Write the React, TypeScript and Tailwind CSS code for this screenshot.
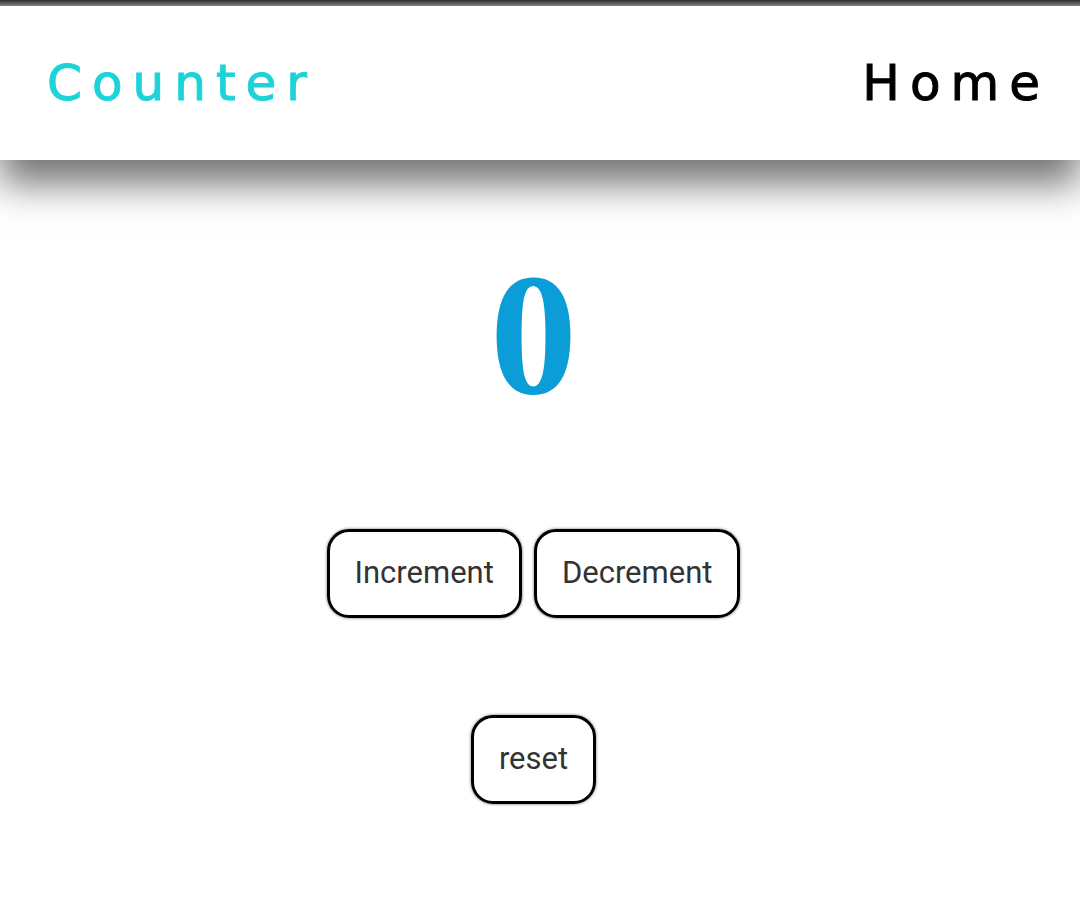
export default function App() {
  return (
    <div className="min-h-[900px] w-full bg-white">
      <div className="h-[6px] w-full bg-gradient-to-b from-[#2f3034] to-[#8a8b8f]" />
      <nav
        className="relative z-10 flex h-[154px] items-center justify-between bg-white pl-[47px] pr-[30px] shadow-[0_24px_36px_rgba(0,0,0,0.55)]"
        style={{ fontFamily: '"DejaVu Sans", "Noto Sans", sans-serif' }}
      >
        <span className="text-[50px] tracking-[0.2em] text-[#1dd3d8] [-webkit-text-stroke:1px_#1dd3d8]">Counter</span>
        <span className="text-[50px] tracking-[0.2em] text-black [-webkit-text-stroke:1px_#000]">Home</span>
      </nav>

      <main className="flex flex-col items-center pr-[13px]" style={{ fontFamily: "Roboto, sans-serif" }}>
        <div
          className="mt-[89px] text-[174px] font-bold leading-[172px] text-[#0b9dd7]"
          style={{ fontFamily: '"Liberation Serif", serif' }}
        >
          0
        </div>

        <div className="mt-[108px] flex gap-[12px]">
          <button className="h-[89px] rounded-[22px] border-[3px] border-black px-[25px] text-[31px] text-[#333] shadow-[0_0_3px_rgba(0,0,0,0.6)]">
            Increment
          </button>
          <button className="h-[89px] rounded-[22px] border-[3px] border-black px-[25px] text-[31px] text-[#333] shadow-[0_0_3px_rgba(0,0,0,0.6)]">
            Decrement
          </button>
        </div>

        <button className="mt-[97px] h-[89px] rounded-[22px] border-[3px] border-black px-[25px] text-[31px] text-[#333] shadow-[0_0_3px_rgba(0,0,0,0.6)]">
          reset
        </button>
      </main>
    </div>
  );
}
